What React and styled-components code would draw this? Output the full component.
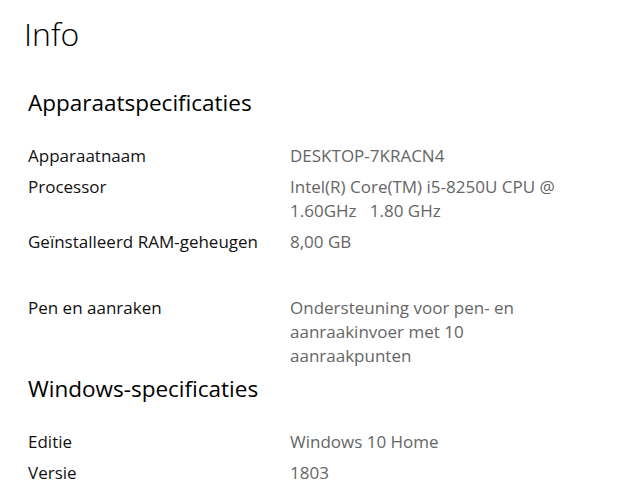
import React from "react";
import styled, { createGlobalStyle } from "styled-components";

const GlobalStyle = createGlobalStyle`
  html, body {
    margin: 0;
    padding: 0;
    background: #ffffff;
  }
  body {
    font-family: "Open Sans", "Noto Sans", "Liberation Sans", sans-serif;
    -webkit-font-smoothing: antialiased;
  }
`;

const Page = styled.div`
  width: 620px;
  height: 495px;
  overflow: hidden;
  background: #fff;
  padding: 0 0 0 28px;
  box-sizing: border-box;
  display: flex;
  flex-direction: column;
`;

const Title = styled.h1`
  margin: 12px 0 0 -4px;
  font-size: 32px;
  line-height: 44px;
  font-weight: 300;
  color: #000;
`;

const SectionTitle = styled.h2`
  margin: ${({ top }) => top}px 0 26px 0;
  font-size: 22.5px;
  line-height: 30px;
  font-weight: 400;
  color: #000;
`;

const Specs = styled.div`
  display: flex;
  flex-direction: column;
  row-gap: 7px;
`;

const Row = styled.div`
  display: grid;
  grid-template-columns: 262px 300px;
  margin-top: ${({ spaced }) => (spaced ? "35px" : "0")};
  font-size: 17px;
  line-height: 24px;
`;

const Label = styled.div`
  color: #111;
`;

const Value = styled.div`
  color: #666;
`;

const device = [
  { label: "Apparaatnaam", value: "DESKTOP-7KRACN4" },
  { label: "Processor", value: ["Intel(R) Core(TM) i5-8250U CPU @", "1.60GHz\u00a0\u00a0\u00a01.80 GHz"] },
  { label: "Geïnstalleerd RAM-geheugen", value: "8,00 GB" },
  {
    label: "Pen en aanraken",
    value: ["Ondersteuning voor pen- en", "aanraakinvoer met 10", "aanraakpunten"],
    spaced: true,
  },
];

const windows = [
  { label: "Editie", value: "Windows 10 Home" },
  { label: "Versie", value: "1803" },
];

const SpecRow = ({ label, value, spaced }) => (
  <Row spaced={spaced}>
    <Label>{label}</Label>
    <Value>
      {Array.isArray(value)
        ? value.map((line) => <div key={line}>{line}</div>)
        : value}
    </Value>
  </Row>
);

export default function App() {
  return (
    <>
      <GlobalStyle />
      <Page>
        <Title>Info</Title>
        <SectionTitle top={32}>Apparaatspecificaties</SectionTitle>
        <Specs>
          {device.map((d) => (
            <SpecRow key={d.label} {...d} />
          ))}
        </Specs>
        <SectionTitle top={6}>Windows-specificaties</SectionTitle>
        <Specs>
          {windows.map((d) => (
            <SpecRow key={d.label} {...d} />
          ))}
        </Specs>
      </Page>
    </>
  );
}
